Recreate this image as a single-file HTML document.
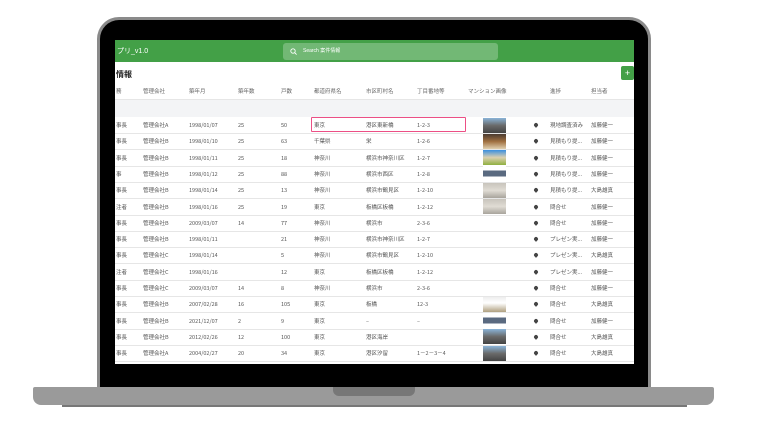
<!DOCTYPE html>
<html><head><meta charset="utf-8"><style>
*{margin:0;padding:0;box-sizing:border-box}
body{width:768px;height:432px;background:#fff;position:relative;overflow:hidden;font-family:"Liberation Sans","Noto Sans CJK JP",sans-serif}
.lid{position:absolute;left:97px;top:17px;width:554px;height:372px;background:#000;border:3px solid #8a8a8a;border-bottom:none;border-radius:22px 22px 0 0}
.scr{position:absolute;left:115px;top:40px;width:519px;height:324px;background:#fff;overflow:hidden}
.bar{position:absolute;left:0;top:0;width:519px;height:22px;background:#43a047}
.bar .t{position:absolute;left:2px;top:6px;color:#fff;font-size:7px}
.sb{position:absolute;left:168px;top:3px;width:215px;height:17px;background:rgba(255,255,255,.25);border-radius:3px;color:#fff;font-size:5px;line-height:17px;padding-left:20px}
.sb svg{position:absolute;left:7px;top:5px}
.ttl{position:absolute;left:1px;top:29px;font-size:8px;color:#222;font-weight:bold}
.plus{position:absolute;left:506px;top:26px;width:13px;height:14px;background:#43a047;border-radius:2px;color:#fff;font-size:9px;text-align:center;line-height:14px}
.c{position:absolute;font-size:5.5px;color:#555;white-space:nowrap;line-height:16px;height:16px;font-family:"Noto Sans CJK JP",sans-serif}
.h{color:#666}
.ln{position:absolute;left:0;width:519px;height:1px;background:#e6e6e6}
.img{position:absolute;width:23px;height:15px}
.pin{position:absolute;width:4px;height:4px;border-radius:50% 50% 50% 0;transform:rotate(-45deg);background:#444}
.base{position:absolute;left:33px;top:387px;width:681px;height:18px;background:#9a9a9a;border-radius:2px 2px 8px 8px}
.notch{position:absolute;left:333px;top:387px;width:82px;height:9px;background:#777;border-radius:0 0 6px 6px}
.sh{position:absolute;left:62px;top:405px;width:625px;height:2px;background:#777}
.pk{position:absolute;left:196px;top:77px;width:155px;height:15px;border:1.5px solid #ec4f85;border-radius:1px}
</style></head><body>
<div class="lid"></div>
<div class="scr">
<div class="bar"><div class="t">プリ_v1.0</div>
<div class="sb"><svg width="7" height="7" viewBox="0 0 7 7"><circle cx="3" cy="3" r="2.2" fill="none" stroke="#fff" stroke-width=".9"/><line x1="4.6" y1="4.6" x2="6.6" y2="6.6" stroke="#fff" stroke-width=".9"/></svg>Search 案件情報</div></div>
<div class="ttl">情報</div><div class="plus">+</div>
<div style="position:absolute;left:0;top:60px;width:519px;height:17px;background:#f3f4f6"></div>
<div id="t"></div>
<div class="pk"></div>
</div>
<div class="base"></div><div class="notch"></div><div class="sh"></div>
<script>
var X=[1,28,74,123,166,199,251,302,353,420,435,476,513];
var H=["務","管理会社","築年月","築年数","戸数","都道府県名","市区町村名","丁目番地等","マンション画像","","進捗","担当者",""];
var R=[
["事長","管理会社A","1998/01/07","25","50","東京","港区東新橋","1-2-3",1,"現地調査済み","加藤健一"],
["事長","管理会社B","1998/01/10","25","63","千葉県","栄","1-2-6",2,"見積もり提...","加藤健一"],
["事長","管理会社B","1998/01/11","25","18","神奈川","横浜市神奈川区","1-2-7",3,"見積もり提...","加藤健一"],
["事","管理会社B","1998/01/12","25","88","神奈川","横浜市西区","1-2-8",4,"見積もり提...","加藤健一"],
["事長","管理会社B","1998/01/14","25","13","神奈川","横浜市鶴見区","1-2-10",5,"見積もり提...","大島雄真"],
["注者","管理会社B","1998/01/16","25","19","東京","板橋区板橋","1-2-12",5,"問合せ","加藤健一"],
["事長","管理会社B","2009/03/07","14","77","神奈川","横浜市","2-3-6",0,"問合せ","加藤健一"],
["事長","管理会社B","1998/01/11","","21","神奈川","横浜市神奈川区","1-2-7",0,"プレゼン実...","加藤健一"],
["事長","管理会社C","1998/01/14","","5","神奈川","横浜市鶴見区","1-2-10",0,"プレゼン実...","大島雄真"],
["注者","管理会社C","1998/01/16","","12","東京","板橋区板橋","1-2-12",0,"プレゼン実...","加藤健一"],
["事長","管理会社C","2009/03/07","14","8","神奈川","横浜市","2-3-6",0,"問合せ","加藤健一"],
["事長","管理会社B","2007/02/28","16","105","東京","板橋","12-3",6,"問合せ","大島雄真"],
["事長","管理会社B","2021/12/07","2","9","東京","–","–",4,"問合せ","加藤健一"],
["事長","管理会社B","2012/02/26","12","100","東京","港区海岸","",1,"問合せ","大島雄真"],
["事長","管理会社A","2004/02/27","20","34","東京","港区汐留","1－2－3－4",1,"問合せ","大島雄真"]];
var col=["","linear-gradient(#8ab4d8,#6a6a6a 50%,#444)","linear-gradient(#4a3a30,#a07040 50%,#e0d0b0)","linear-gradient(#3a8fe0,#dcd0b0 50%,#90b040)","linear-gradient(#fff 0,#fff 30%,#5a6a80 30%,#5a6a80 70%,#fff 70%)","linear-gradient(#c8c4bc,#e0dcd4 50%,#a8a49c)","linear-gradient(#eee,#fff 40%,#b0a080)"];
var s="";
for(var i=0;i<H.length;i++)s+='<div class="c h" style="left:'+X[i]+'px;top:43px">'+H[i]+'</div>';
s+='<div class="ln" style="top:59px"></div>';
for(var r=0;r<R.length;r++){var y=77+r*16.3,d=R[r];
 s+='<div class="ln" style="top:'+(y+16)+'px"></div>';
 var vals=[d[0],d[1],d[2],d[3],d[4],d[5],d[6],d[7]];
 for(var k=0;k<8;k++)s+='<div class="c" style="left:'+X[k]+'px;top:'+y+'px">'+vals[k]+'</div>';
 if(d[8])s+='<div class="img" style="left:368px;top:'+(y+0.5)+'px;background:'+col[d[8]]+'"></div>';
 s+='<div class="pin" style="left:419px;top:'+(y+6)+'px"></div>';
 s+='<div class="c" style="left:'+X[10]+'px;top:'+y+'px">'+d[9]+'</div>';
 s+='<div class="c" style="left:'+X[11]+'px;top:'+y+'px">'+d[10]+'</div>';
}
document.getElementById('t').innerHTML=s;
</script>
</body></html>
